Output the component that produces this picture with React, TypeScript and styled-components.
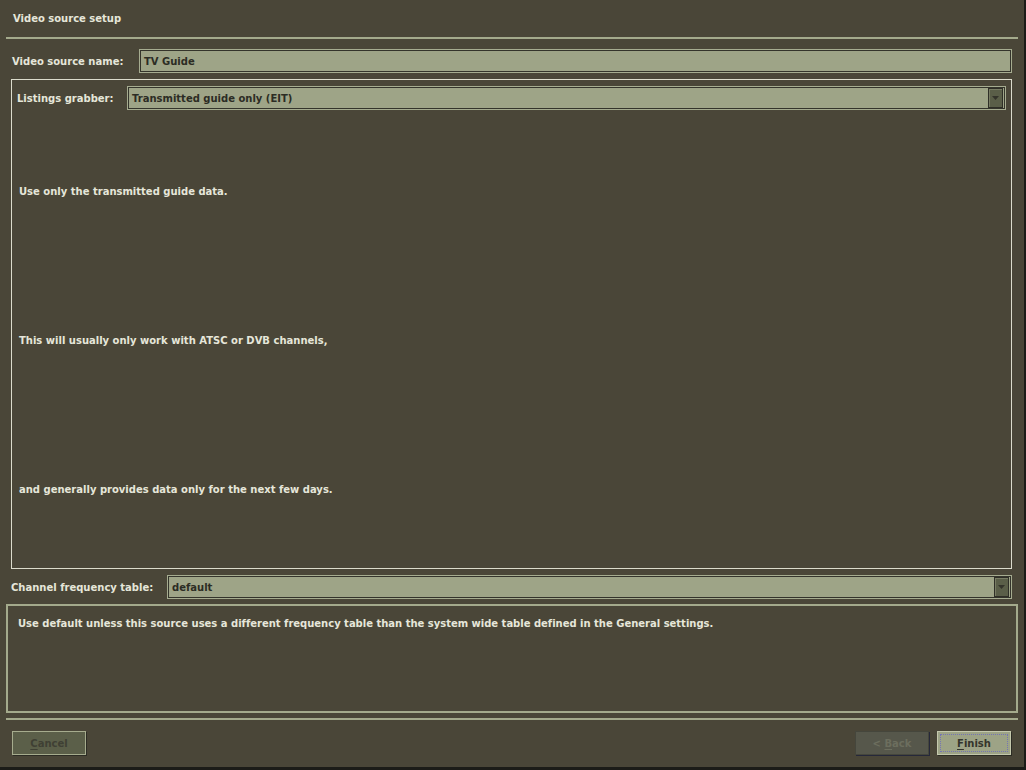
import React from "react";
import styled, { createGlobalStyle } from "styled-components";

const GlobalStyle = createGlobalStyle`
  html, body {
    margin: 0;
    padding: 0;
    background: #1c1c18;
  }
  body {
    font-family: "DejaVu Sans", "Liberation Sans", sans-serif;
    font-weight: bold;
    font-size: 10px;
  }
`;

const Window = styled.div`
  width: 1024px;
  height: 767px;
  background: #4a4638;
  color: #e6e6da;
  display: flex;
  flex-direction: column;
  padding: 0 6px;
  box-sizing: border-box;
`;

const Title = styled.div`
  height: 37px;
  display: flex;
  align-items: center;
  padding-left: 7px;
`;

const Rule = styled.div<{ $top?: number }>`
  height: 2px;
  background: #a4aa8c;
  margin-top: ${(p) => p.$top ?? 0}px;
`;

const Row = styled.div<{ $top: number; $labelWidth: number; $pad: number }>`
  display: flex;
  align-items: center;
  margin-top: ${(p) => p.$top}px;
  padding: 0 6px 0 ${(p) => p.$pad}px;
  & > label {
    width: ${(p) => p.$labelWidth}px;
    flex: none;
    white-space: nowrap;
  }
`;

const Field = styled.div`
  flex: 1;
  height: 24px;
  box-sizing: border-box;
  background: #9ea487;
  border: 1px solid #a6ac90;
  box-shadow: inset 0 0 0 1px #34342b;
  color: #2c2c24;
  display: flex;
  align-items: center;
  padding-left: 4px;
  position: relative;
`;

const DropButton = styled.div`
  position: absolute;
  right: 2px;
  top: 1px;
  bottom: 1px;
  width: 15px;
  background: #5a5e48;
  border: 1px solid #2f2f27;
  box-shadow: inset 1px 1px 0 #787c64;
  box-sizing: border-box;
  display: flex;
  align-items: center;
  justify-content: center;
  svg {
    display: block;
  }
`;

const Group = styled.div`
  margin: 6px 6px 0 5px;
  border: 1px solid #dcdccc;
  height: 490px;
  box-sizing: border-box;
  display: flex;
  flex-direction: column;
  padding: 6px 5px 4px 5px;
`;

const GroupRow = styled.div`
  display: flex;
  align-items: center;
  & > label {
    width: 110px;
    flex: none;
    white-space: nowrap;
  }
`;

const HelpLines = styled.div`
  flex: 1;
  display: flex;
  flex-direction: column;
  padding-top: 7px;
`;

const HelpLine = styled.div`
  flex: 1;
  display: flex;
  align-items: center;
  padding-left: 2px;
`;

const DescBox = styled.div`
  margin-top: 5px;
  height: 109px;
  box-sizing: border-box;
  border: 2px solid #a4aa8c;
  padding: 12px 10px 10px;
  line-height: 12px;
  letter-spacing: -0.01px;
`;

const Footer = styled.div`
  display: flex;
  align-items: center;
  justify-content: space-between;
  padding: 11px 7px 0 6px;
`;

const Right = styled.div`
  display: flex;
  gap: 8px;
`;

const Btn = styled.div<{ $kind: "cancel" | "back" | "finish" }>`
  width: 74px;
  height: 24px;
  box-sizing: border-box;
  display: flex;
  align-items: center;
  justify-content: center;
  position: relative;
  background: ${(p) =>
    p.$kind === "finish" ? "#9da386" : p.$kind === "back" ? "#56574b" : "#5b5f49"};
  border: 1px solid
    ${(p) =>
      p.$kind === "finish" ? "#c4c8ac" : p.$kind === "back" ? "#45463c" : "#a6ac8e"};
  box-shadow: 1px 1px 0 ${(p) => (p.$kind === "back" ? "#26283a" : "#2c2c24")};
  color: ${(p) =>
    p.$kind === "finish" ? "#34342b" : p.$kind === "back" ? "#6c6e5e" : "#3f4034"};
  ${(p) =>
    p.$kind === "finish" &&
    `&::after {
      content: "";
      position: absolute;
      inset: 2px;
      border: 1px dotted #7474b4;
    }`}
  u {
    text-decoration: underline;
    text-underline-offset: 2px;
  }
`;

const Arrow = () => (
  <svg width="7" height="4" viewBox="0 0 7 4">
    <path d="M0 0 H7 L3.5 4 Z" fill="#34342b" />
  </svg>
);

export default function App() {
  return (
    <>
      <GlobalStyle />
      <Window>
        <Title>Video source setup</Title>
        <Rule />
        <Row $top={10} $labelWidth={127} $pad={6}>
          <label>Video source name:</label>
          <Field>TV Guide</Field>
        </Row>
        <Group>
          <GroupRow>
            <label>Listings grabber:</label>
            <Field>
              Transmitted guide only (EIT)
              <DropButton>
                <Arrow />
              </DropButton>
            </Field>
          </GroupRow>
          <HelpLines>
            <HelpLine>Use only the transmitted guide data.</HelpLine>
            <HelpLine>This will usually only work with ATSC or DVB channels,</HelpLine>
            <HelpLine>and generally provides data only for the next few days.</HelpLine>
          </HelpLines>
        </Group>
        <Row $top={6} $labelWidth={156} $pad={5}>
          <label>Channel frequency table:</label>
          <Field>
            default
            <DropButton>
              <Arrow />
            </DropButton>
          </Field>
        </Row>
        <DescBox>
          Use default unless this source uses a different frequency table than the system wide
          table defined in the General settings.
        </DescBox>
        <Rule $top={5} />
        <Footer>
          <Btn $kind="cancel">
            <span>
              <u>C</u>ancel
            </span>
          </Btn>
          <Right>
            <Btn $kind="back">
              <span>
                &lt; <u>B</u>ack
              </span>
            </Btn>
            <Btn $kind="finish">
              <span>
                <u>F</u>inish
              </span>
            </Btn>
          </Right>
        </Footer>
      </Window>
    </>
  );
}
